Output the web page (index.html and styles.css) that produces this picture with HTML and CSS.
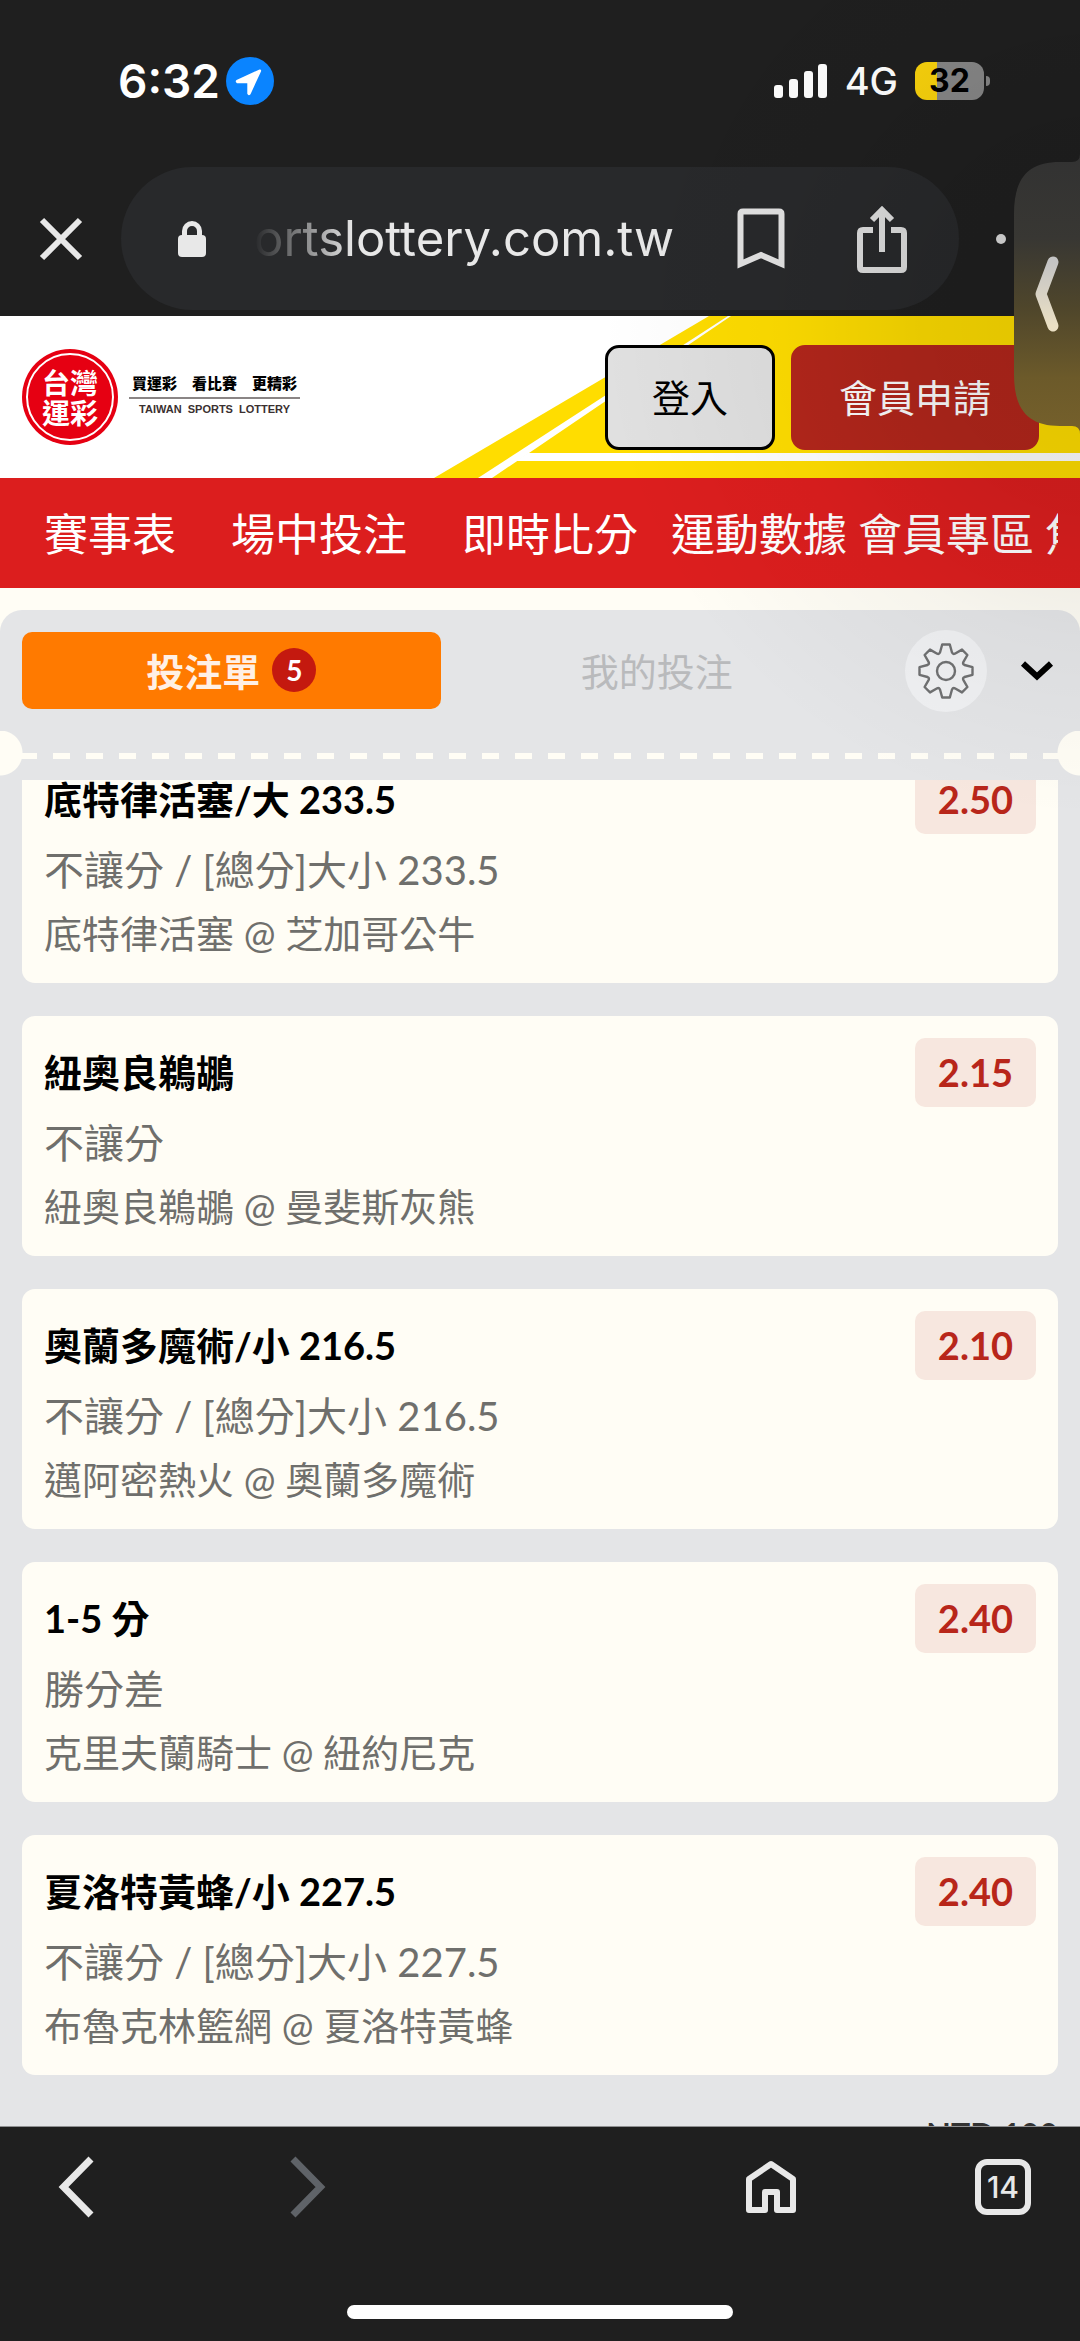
FILE: index.html
```html
<!DOCTYPE html>
<html lang="zh-Hant">
<head>
  <meta charset="UTF-8" />
  <meta name="viewport" content="width=device-width, initial-scale=1.0"/>
  <title>台灣運彩</title>
  <link rel="stylesheet" href="styles.css">
</head>
<body>
  <div class="screen">

    <!-- Browser top -->
    <div class="chrome-top">
      <div class="status-bar">
        <div class="status-left">
          <span class="clock">6:32</span>
          <svg class="location" width="48" height="48" viewBox="0 0 48 48">
            <circle cx="24" cy="24" r="24" fill="#0a84ff"/>
            <path d="M33.500 12.500 10.500 23q-1.800 2 0.500 3.200h10.300v10.500q1.200 2.600 3.200 0.500l10.600-23q0.400-2-1.600-1.700z" fill="#fff"/>
          </svg>
        </div>
        <div class="status-right">
          <svg width="54" height="34" viewBox="0 0 54 34" fill="#fff">
            <rect x="0" y="21" width="9" height="13" rx="3"/>
            <rect x="15" y="15" width="9" height="19" rx="3"/>
            <rect x="30" y="7" width="9" height="27" rx="3"/>
            <rect x="44" y="0" width="9" height="34" rx="3"/>
          </svg>
          <span class="network">4G</span>
          <span class="battery"><span class="battery-level">32</span></span>
        </div>
      </div>

      <div class="toolbar">
        <button class="tool-btn side" aria-label="Close">
          <svg width="44" height="44" viewBox="0 0 44 44" fill="none" stroke="#e8e8e8" stroke-width="6"><path d="M3 3 41 41M41 3 3 41"/></svg>
        </button>
        <div class="address">
          <svg width="28" height="36" viewBox="0 0 28 36">
            <rect x="0" y="14" width="28" height="22" rx="4" fill="#e8e8e8"/>
            <path d="M6.500 17V10a7.500 7.500 0 0 1 15 0v7" fill="none" stroke="#e8e8e8" stroke-width="5"/>
          </svg>
          <input class="url" type="text" value="ortslottery.com.tw" aria-label="Address" readonly>
          <button class="tool-btn" aria-label="Bookmark">
            <svg width="48" height="62" viewBox="0 0 48 62" fill="none" stroke="#e3e3e3" stroke-width="6"><path d="M3.500 56V6q0-2.500 2.500-2.500h36q2.500 0 2.500 2.500v50L24 47z"/></svg>
          </button>
          <button class="tool-btn share" aria-label="Share">
            <svg width="50" height="68" viewBox="0 0 50 68" fill="none" stroke="#dedede" stroke-width="6"><path d="M16 25H6q-3 0-3 3v34q0 3 3 3h38q3 0 3-3V28q0-3-3-3H34M25 47V6M15 15 25 5l10 10"/></svg>
          </button>
        </div>
        <button class="tool-btn side" aria-label="Menu">
          <svg width="48" height="10" viewBox="0 0 48 10" fill="#dcdcdc"><circle cx="5" cy="5" r="5"/><circle cx="24" cy="5" r="5"/><circle cx="43" cy="5" r="5"/></svg>
        </button>
      </div>
    </div>

    <!-- Site header -->
    <header class="site-header">
      <svg class="header-art" width="646" height="162" viewBox="0 0 646 162">
        <path d="M0 162 275 0H646V162z" fill="#ffdd00"/>
        <path d="M44 162 294 0h3L58 162z" fill="#fff"/>
        <path d="M94 137H646v8H82z" fill="#fff"/>
      </svg>
      <a class="logo" href="#">
        <span class="logo-mark"><span class="logo-ring">台灣<br>運彩</span></span>
        <span class="logo-text">
          <span class="slogan">買運彩　看比賽　更精彩</span>
          <span class="slogan-en">TAIWAN&nbsp; SPORTS&nbsp; LOTTERY</span>
        </span>
      </a>
      <div class="header-btns">
        <button class="btn login">登入</button>
        <button class="btn join">會員申請</button>
      </div>
    </header>

    <nav class="main-nav">
      <a class="wide" href="#">賽事表</a>
      <a class="wide" href="#">場中投注</a>
      <a class="wide" href="#">即時比分</a>
      <a href="#">運動數據</a>
      <a href="#">會員專區</a>
      <a href="#">焦點</a>
    </nav>

    <!-- Bet slip -->
    <main class="slip">
      <div class="slip-head">
        <button class="tab active">投注單 <span class="count">5</span></button>
        <button class="tab">我的投注</button>
        <button class="gear" aria-label="Settings">
          <svg width="56" height="56" viewBox="-28 -28 56 56" fill="none" stroke="#707172" stroke-width="2.400" stroke-linejoin="round">
            <path d="M-6-18.500-3.800-26.500H3.800L6-18.500Q7-16.500 8.800-17.300L16-21.400 21.400-16 17.300-8.800Q16.500-7 18.500-6L26.500-3.800V3.800L18.500 6Q16.500 7 17.300 8.800L21.400 16 16 21.400 8.800 17.300Q7 16.500 6 18.500L3.800 26.500H-3.800L-6 18.500Q-7 16.500-8.800 17.300L-16 21.400-21.400 16-17.300 8.800Q-16.500 7-18.500 6L-26.500 3.800V-3.800L-18.500-6Q-16.500-7-17.300-8.800L-21.400-16-16-21.400-8.800-17.300Q-7-16.500-6-18.500z"/>
            <circle r="9"/>
          </svg>
        </button>
        <button class="fold" aria-label="Collapse">
          <svg width="34" height="20" viewBox="0 0 34 20" fill="none" stroke="#000" stroke-width="6"><path d="M3 2.500 17 15.500 31 2.500"/></svg>
        </button>
      </div>

      <div class="tear"></div>

      <div class="bet-scroll">
        <ul class="bet-list">
          <li class="bet">
            <div class="bet-head"><h3>底特律活塞/大 233.5</h3><span class="odds">2.50</span></div>
            <p class="market">不讓分 / [總分]大小 233.5</p>
            <p class="match">底特律活塞 @ 芝加哥公牛</p>
          </li>
          <li class="bet">
            <div class="bet-head"><h3>紐奧良鵜鶘</h3><span class="odds">2.15</span></div>
            <p class="market">不讓分</p>
            <p class="match">紐奧良鵜鶘 @ 曼斐斯灰熊</p>
          </li>
          <li class="bet">
            <div class="bet-head"><h3>奧蘭多魔術/小 216.5</h3><span class="odds">2.10</span></div>
            <p class="market">不讓分 / [總分]大小 216.5</p>
            <p class="match">邁阿密熱火 @ 奧蘭多魔術</p>
          </li>
          <li class="bet">
            <div class="bet-head"><h3>1-5 分</h3><span class="odds">2.40</span></div>
            <p class="market">勝分差</p>
            <p class="match">克里夫蘭騎士 @ 紐約尼克</p>
          </li>
          <li class="bet">
            <div class="bet-head"><h3>夏洛特黃蜂/小 227.5</h3><span class="odds">2.40</span></div>
            <p class="market">不讓分 / [總分]大小 227.5</p>
            <p class="match">布魯克林籃網 @ 夏洛特黃蜂</p>
          </li>
        </ul>
        <p class="stake">NTD 100</p>
      </div>
    </main>

    <!-- Browser bottom -->
    <footer class="chrome-bottom">
      <div class="bottom-nav">
        <button class="tool-btn" aria-label="Back">
          <svg width="36" height="62" viewBox="0 0 36 62" fill="none" stroke="#e8e8e8" stroke-width="7"><path d="M33 3 5.500 31 33 59"/></svg>
        </button>
        <button class="tool-btn" aria-label="Forward" disabled>
          <svg width="36" height="62" viewBox="0 0 36 62" fill="none" stroke="#5f6368" stroke-width="7"><path d="M3 3 30.500 31 3 59"/></svg>
        </button>
        <button class="tool-btn home" aria-label="Home">
          <svg width="50" height="54" viewBox="0 0 50 54" fill="none" stroke="#e8e8e8" stroke-width="6" stroke-linejoin="round"><path d="M3 19 25 4 47 19V50H31V32H19V50H3z"/></svg>
        </button>
        <button class="tool-btn" aria-label="Tabs"><span class="tab-count">14</span></button>
      </div>
      <div class="home-indicator"></div>
    </footer>

    <!-- Floating drawer handle -->
    <div class="shade"></div>
    <button class="drawer" aria-label="Open drawer">
      <svg width="66" height="280" viewBox="0 0 66 280">
        <defs>
          <linearGradient id="drawerFill" x1="0" y1="0" x2="0" y2="1">
            <stop offset="0" stop-color="#323232"/>
            <stop offset="0.300" stop-color="#383733"/>
            <stop offset="0.550" stop-color="#4f462b"/>
            <stop offset="0.800" stop-color="#6c5a2a"/>
            <stop offset="1" stop-color="#75602b"/>
          </linearGradient>
          <linearGradient id="drawerArrow" x1="0" y1="0" x2="0" y2="1">
            <stop offset="0" stop-color="#c4c4c4"/>
            <stop offset="1" stop-color="#ebe0c4"/>
          </linearGradient>
        </defs>
        <path d="M66 0Q66 8 58 8H46C16 8 0 22 0 60V220C0 256 14 272 46 272H58Q66 272 66 280z" fill="url(#drawerFill)"/>
        <path d="M39 108 27 140 39 172" fill="none" stroke="url(#drawerArrow)" stroke-width="11" stroke-linecap="round" stroke-linejoin="round"/>
      </svg>
    </button>
  </div>
</body>
</html>
```
FILE: styles.css
```css
/* —— Reset & Base —— */
* { box-sizing: border-box; margin: 0; padding: 0; }
body { font-family: Lato, "Noto Sans CJK TC", sans-serif; background: #fffdf5; color: #000; }
button, input { font: inherit; border: none; background: none; }
button { cursor: pointer; }
a { color: inherit; text-decoration: none; }
ul { list-style: none; }
svg { display: block; flex: none; }

.screen {
  position: relative;
  display: flex;
  flex-direction: column;
  height: 100vh;
  overflow: hidden;
}

/* —— Browser top —— */
.chrome-top { background: #1f1f1f; padding-bottom: 6px; font-family: Inter, sans-serif; }
.status-bar {
  display: flex;
  justify-content: space-between;
  align-items: center;
  height: 167px;
  padding: 0 96px 5px 118px;
  color: #fff;
}
.status-left, .status-right { display: flex; align-items: center; }
.status-left { gap: 6px; }
.status-right { gap: 17px; }
.clock { font-size: 46px; font-weight: 600; }
.network { font-size: 38px; font-weight: 500; }
.battery { position: relative; }
.battery::after {
  content: "";
  position: absolute;
  left: 71px;
  top: 14px;
  width: 4px;
  height: 10px;
  border-radius: 0 5px 5px 0;
  background: #868686;
}
.battery-level {
  display: block;
  width: 69px;
  height: 38px;
  border-radius: 12px;
  background: linear-gradient(to right, #f9d20c 32%, #868686 32%);
  color: #000;
  font-size: 32px;
  font-weight: 700;
  line-height: 38px;
  text-align: center;
}
.toolbar { display: flex; align-items: center; }
.tool-btn { display: flex; align-items: center; justify-content: center; }
.side { width: 121px; }
.address {
  flex: 1;
  display: flex;
  align-items: center;
  min-width: 0;
  height: 143px;
  padding: 0 52px 0 57px;
  border-radius: 72px;
  background: #28292b;
}
.url {
  flex: 1;
  min-width: 0;
  margin-left: 48px;
  color: #e8e8e8;
  font-size: 49px;
  outline: none;
  -webkit-mask-image: linear-gradient(to right, transparent, #000 100px);
  mask-image: linear-gradient(to right, transparent, #000 100px);
}
.share { margin-left: 72px; }

/* —— Site header —— */
.site-header {
  position: relative;
  display: flex;
  align-items: center;
  justify-content: space-between;
  height: 162px;
  padding: 0 41px 0 22px;
  background: #fff;
}
.header-art { position: absolute; right: 0; top: 0; }
.logo { position: relative; display: flex; align-items: center; gap: 11px; }
.logo-mark {
  width: 96px;
  height: 96px;
  padding: 4px;
  border-radius: 50%;
  background: #e60012;
}
.logo-ring {
  display: block;
  height: 88px;
  padding-top: 13px;
  border: 2px solid #fff;
  border-radius: 50%;
  color: #fff;
  font-size: 28px;
  font-weight: 700;
  line-height: 30px;
  text-align: center;
}
.logo-text { margin-top: -6px; text-align: center; }
.slogan {
  display: block;
  padding: 0 3px;
  border-bottom: 2px solid #8a8585;
  font-size: 15px;
  font-weight: 900;
  line-height: 28px;
}
.slogan-en {
  display: block;
  color: #3a3030;
  font-family: "Liberation Sans", Arial, sans-serif;
  font-size: 11px;
  font-weight: 700;
  line-height: 20px;
}
.header-btns { position: relative; display: flex; gap: 16px; }
.btn {
  height: 105px;
  padding: 0 45px 4px;
  border: 3px solid #000;
  border-radius: 14px;
  font-size: 38px;
}
.login { padding: 0 44px 4px; background: #e0e0e0; }
.join { border-color: #b3261b; background: #b3261b; color: #fff; }

/* —— Main nav —— */
.main-nav {
  display: flex;
  align-items: center;
  height: 110px;
  margin-bottom: 22px;
  padding-bottom: 3px;
  background: #dc1e1e;
  border: solid #dc1e1e;
  border-width: 0 22px;
  color: #fff;
  font-size: 44px;
  overflow: hidden;
}
.main-nav a { flex: none; margin-right: 11px; }
.main-nav .wide { margin-left: 22px; margin-right: 33px; }

/* —— Bet slip —— */
.slip {
  flex: 1;
  display: flex;
  flex-direction: column;
  min-height: 0;
  border-radius: 22px 22px 0 0;
  background: #e4e5e7;
}
.slip-head { display: flex; align-items: center; height: 121px; padding: 0 26px 0 22px; }
.tab {
  flex: 1;
  display: flex;
  align-items: center;
  justify-content: center;
  gap: 12px;
  height: 77px;
  padding-bottom: 2px;
  border-radius: 10px;
  color: #b9babc;
  font-size: 38px;
}
.tab.active { margin-right: 7px; background: #ff7a00; color: #fff0e5; font-weight: 700; }
.count {
  width: 44px;
  height: 44px;
  border-radius: 50%;
  background: #c4190f;
  color: #fff;
  font-size: 28px;
  line-height: 44px;
}
.gear {
  display: flex;
  align-items: center;
  justify-content: center;
  width: 82px;
  height: 82px;
  margin: 0 33px 0 39px;
  border-radius: 50%;
  background: #f0f1f3;
}

/* Perforated line with a notch at each end */
.tear {
  height: 49px;
  background:
    radial-gradient(circle at 0 22px, #fffdf5 22px, transparent 23px),
    radial-gradient(circle at 100% 22px, #fffdf5 22px, transparent 23px),
    repeating-linear-gradient(to right, #fffdf5 0 17px, transparent 17px 33px) 20px 22px / calc(100% - 41px) 6px no-repeat;
}

/* —— Bet cards —— */
.bet-scroll { flex: 1; min-height: 0; padding: 0 22px; overflow: hidden; }
.bet-list { display: grid; gap: 33px; margin-top: -37px; }
.bet { padding: 22px 22px 18px; border-radius: 13px; background: #fffdf5; }
.bet-head { display: flex; align-items: center; justify-content: space-between; margin-bottom: 5px; }
.bet-head h3 { padding-bottom: 4px; font-size: 38px; font-weight: 700; }
.odds {
  padding: 0 23px;
  border-radius: 10px;
  background: #f7e7df;
  color: #b8261a;
  font-size: 38px;
  font-weight: 700;
  line-height: 69px;
}
.market, .match { color: #6f6f6c; line-height: 63px; }
.market { font-size: 40px; }
.match { font-size: 38px; }
.stake {
  margin-top: 44px;
  color: #333;
  font-size: 32px;
  font-weight: 700;
  line-height: 32px;
  text-align: right;
}

/* —— Browser bottom —— */
.chrome-bottom {
  position: relative;
  height: 215px;
  border-top: 1px solid #8f9092;
  background: #1f1f1f;
  font-family: Inter, sans-serif;
}
.bottom-nav {
  display: grid;
  grid-template-columns: repeat(5, 68px);
  justify-content: space-between;
  align-items: center;
  height: 120px;
  padding: 0 43px 0 42px;
}
.home { grid-column: 4; }
.tab-count {
  width: 56px;
  height: 56px;
  border: 6px solid #e8e8e8;
  border-radius: 12px;
  color: #e8e8e8;
  font-size: 30px;
  font-weight: 500;
  line-height: 44px;
}
.home-indicator {
  width: 386px;
  max-width: 60%;
  height: 14px;
  margin: 58px auto 0;
  border-radius: 7px;
  background: #fff;
}

/* —— Drawer handle —— */
.shade {
  position: absolute;
  top: 0;
  right: 0;
  width: 560px;
  height: 900px;
  background: radial-gradient(circle at 580px 320px, rgba(0,0,0,0.12), rgba(0,0,0,0.09) 180px, rgba(0,0,0,0.035) 320px, transparent 500px);
  pointer-events: none;
}
.drawer { position: absolute; top: 154px; right: 0; }
```
